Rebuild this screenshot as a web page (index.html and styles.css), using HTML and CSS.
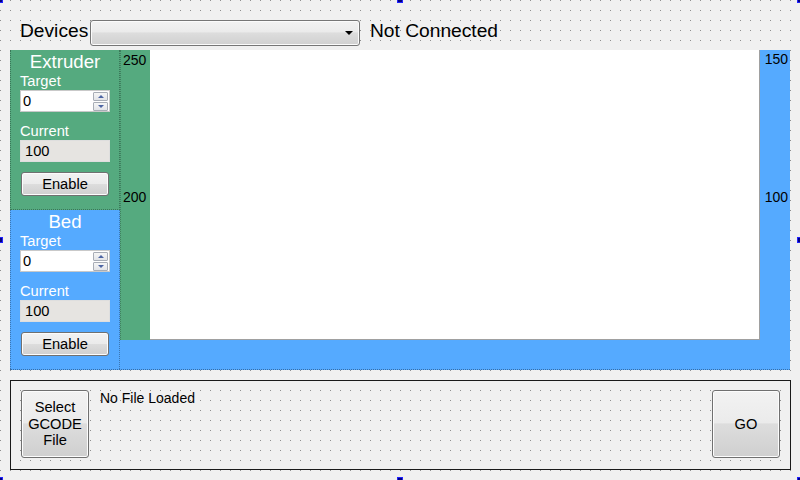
FILE: index.html
```html
<!DOCTYPE html>
<html>
<head>
<meta charset="utf-8">
<link rel="stylesheet" href="styles.css">
</head>
<body>
<div class="topbar">
  <span class="top-label devices">Devices</span>
  <div class="combo"><span class="combo-arrow"></span></div>
  <span class="top-label status">Not Connected</span>
</div>

<div class="panel">
  <div class="groups">
    <div class="group extruder">
      <div class="title">Extruder</div>
      <div class="lbl">Target</div>
      <div class="spin">
        <span class="spin-value">0</span>
        <div class="spin-btns">
          <span class="spin-btn up"><span class="tri tri-up"></span></span>
          <span class="spin-btn down"><span class="tri tri-down"></span></span>
        </div>
      </div>
      <div class="lbl lbl-current">Current</div>
      <div class="field">100</div>
      <button class="btn btn-enable">Enable</button>
    </div>
    <div class="group bed">
      <div class="title">Bed</div>
      <div class="lbl">Target</div>
      <div class="spin">
        <span class="spin-value">0</span>
        <div class="spin-btns">
          <span class="spin-btn up"><span class="tri tri-up"></span></span>
          <span class="spin-btn down"><span class="tri tri-down"></span></span>
        </div>
      </div>
      <div class="lbl lbl-current">Current</div>
      <div class="field">100</div>
      <button class="btn btn-enable">Enable</button>
    </div>
  </div>
  <div class="graph">
    <div class="graph-row">
      <div class="axis axis-left">
        <span class="tick tick-top">250</span>
        <span class="tick tick-mid">200</span>
      </div>
      <div class="plot"></div>
      <div class="axis axis-right">
        <span class="tick tick-top">150</span>
        <span class="tick tick-mid">100</span>
      </div>
    </div>
  </div>
</div>

<div class="filebar">
  <button class="btn btn-big btn-select">Select<br>GCODE<br>File</button>
  <span class="filename">No File Loaded</span>
  <button class="btn btn-big btn-go">GO</button>
</div>

<span class="handle h-tl"></span>
<span class="handle h-tc"></span>
<span class="handle h-tr"></span>
<span class="handle h-ml"></span>
<span class="handle h-mr"></span>
<span class="handle h-bl"></span>
<span class="handle h-bc"></span>
<span class="handle h-br"></span>
</body>
</html>
```

FILE: styles.css
```css
* { box-sizing: border-box; }
html, body { margin: 0; padding: 0; }
body {
  width: 800px;
  height: 480px;
  overflow: hidden;
  position: relative;
  font-family: "Liberation Sans", Arial, sans-serif;
  color: #000;
  background-color: #8e8e8e;
  background-image:
    linear-gradient(90deg, transparent 1px, #f0f0f0 1px),
    linear-gradient(180deg, transparent 1px, #f0f0f0 1px);
  background-size: 10px 10px;
}

/* ---------- top bar ---------- */
.topbar {
  display: flex;
  align-items: flex-start;
  height: 25px;
  margin: 20px 0 5px 20px;
}
.top-label {
  font-size: 19.2px;
  line-height: 20px;
  padding-top: 1px;
  white-space: nowrap;
}
.devices { width: 70px; }
.status { margin-left: 10px; }
.combo {
  position: relative;
  width: 270px;
  height: 26px;
  border: 1px solid #767676;
  border-radius: 3px;
  background: linear-gradient(#f2f2f2 0%, #ebebeb 45%, #dddddd 50%, #d0d0d0 100%);
  box-shadow: inset 0 0 0 1px #fbfbfb;
}
.combo-arrow {
  position: absolute;
  right: 6px;
  top: 10px;
  width: 0;
  height: 0;
  border-left: 4px solid transparent;
  border-right: 4px solid transparent;
  border-top: 4px solid #000;
}

/* ---------- main panel ---------- */
.panel {
  display: flex;
  width: 780px;
  height: 320px;
  margin: 0 10px;
  background: #55aaff;
  border-bottom: 1px dotted rgba(0, 0, 0, 0.35);
}
.groups {
  width: 110px;
  display: flex;
  flex-direction: column;
}
.group {
  height: 160px;
  padding: 0 9px;
  color: #fff;
  font-size: 14.67px;
  border-left: 1px dotted rgba(0, 0, 0, 0.3);
  border-right: 1px dotted rgba(0, 0, 0, 0.3);
  display: flex;
  flex-direction: column;
}
.extruder {
  background: #55aa7f;
  border-bottom: 1px dotted rgba(0, 0, 0, 0.3);
}
.bed {
  background: #55aaff;
  height: 159px;
}
.title {
  text-align: center;
  font-size: 18.67px;
  line-height: 20px;
  padding-top: 2px;
  height: 22px;
}
.lbl {
  line-height: 16px;
  margin-top: 1px;
  white-space: nowrap;
}
.lbl-current { margin-top: 11px; }

.spin {
  position: relative;
  margin-top: 1px;
  height: 22px;
  width: 90px;
  background: #fff;
  border: 1px solid #c9c9c9;
  color: #000;
  display: flex;
}
.spin-value {
  padding-left: 2px;
  line-height: 20px;
}
.spin-btns {
  position: absolute;
  right: 1px;
  top: 1px;
  width: 15px;
  display: flex;
  flex-direction: column;
}
.spin-btn {
  display: flex;
  align-items: center;
  justify-content: center;
  height: 9px;
  border: 1px solid #a8adb6;
  background: linear-gradient(#f6f6f6, #e2e4e8);
  border-radius: 1px;
}
.spin-btn.down { margin-top: 1px; }
.tri {
  width: 0;
  height: 0;
  border-left: 3px solid transparent;
  border-right: 3px solid transparent;
}
.tri-up { border-bottom: 3px solid #4d65a3; }
.tri-down { border-top: 3px solid #4d65a3; }

.field {
  margin-top: 1px;
  height: 22px;
  width: 90px;
  background: #e6e4e1;
  border: 1px solid #dedede;
  color: #000;
  padding-left: 4px;
  line-height: 20px;
}

.btn {
  border: 1px solid #707070;
  border-radius: 3px;
  background: linear-gradient(#f2f2f2 0%, #ebebeb 48%, #dddddd 50%, #cfcfcf 100%);
  box-shadow: inset 0 0 0 1px #fcfcfc;
  font-family: "Liberation Sans", Arial, sans-serif;
  font-size: 14.67px;
  color: #000;
  padding: 0;
  margin: 0;
}
.btn-enable {
  margin-top: 10px;
  margin-left: 1px;
  width: 88px;
  height: 24px;
  line-height: 20px;
}

/* ---------- graph ---------- */
.graph {
  flex: 1;
  background: #55aaff;
}
.graph-row {
  display: flex;
  height: 290px;
}
.axis {
  width: 30px;
  display: flex;
  flex-direction: column;
  font-size: 14px;
  line-height: 16px;
  color: #000;
}
.axis-left {
  background: #55aa7f;
  padding: 2px 0 0 3px;
  border-left: 1px dotted rgba(0, 0, 0, 0.25);
}
.axis-left .tick { margin-left: -1px; }
.axis-left .tick-mid { margin-top: 121px; }
.axis-right {
  padding: 1px 2px 0 0;
  align-items: flex-end;
}
.axis-right .tick-mid { margin-top: 122px; }
.plot {
  flex: 1;
  background: #fff;
  border-right: 1px solid #a0a0a0;
  border-bottom: 1px solid #a0a0a0;
}

/* ---------- file bar ---------- */
.filebar {
  display: flex;
  align-items: flex-start;
  width: 781px;
  height: 90px;
  margin: 10px 0 0 10px;
  border: 1px solid #1a1a1a;
  padding: 9px 10px 9px 10px;
}
.btn-big {
  width: 68px;
  height: 68px;
  line-height: 16.5px;
}
.filename {
  margin-left: 11px;
  font-size: 14px;
  line-height: 16px;
  white-space: nowrap;
}
.btn-go { margin-left: auto; }

/* ---------- designer selection handles ---------- */
.handle {
  position: absolute;
  width: 6px;
  height: 6px;
  background: #000080;
  border: 1px solid #2020ff;
}
.h-tl { left: -3px; top: -3px; }
.h-tc { left: 397px; top: -3px; }
.h-tr { right: -3px; top: -3px; }
.h-ml { left: -3px; top: 237px; }
.h-mr { right: -3px; top: 237px; }
.h-bl { left: -3px; bottom: -3px; }
.h-bc { left: 397px; bottom: -3px; }
.h-br { right: -3px; bottom: -3px; }
```
